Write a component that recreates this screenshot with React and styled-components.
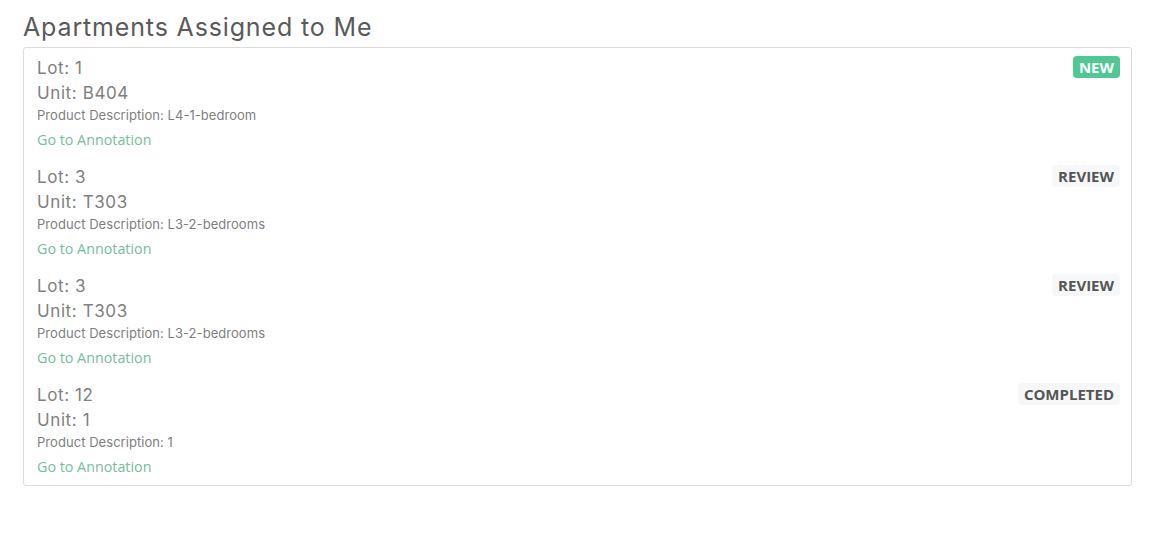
import React from "react";
import styled, { createGlobalStyle } from "styled-components";

const GlobalStyle = createGlobalStyle`
  body {
    margin: 0;
    background: #fff;
    font-family: "Inter", "Open Sans", sans-serif;
  }
`;

const Page = styled.div`
  padding: 12px 37px 12px 23px;
`;

const Title = styled.h2`
  margin: 0 0 4px;
  font-family: "Inter", sans-serif;
  font-weight: 400;
  font-size: 25px;
  line-height: 31px;
  color: #5a5a5a;
  letter-spacing: 0.85px;
`;

const Card = styled.div`
  border: 1px solid #dcdcdc;
  border-radius: 3px;
  padding: 8px 11px 6px 13px;
  display: flex;
  flex-direction: column;
  gap: 13px;
`;

const Item = styled.div`
  display: flex;
  justify-content: space-between;
  align-items: flex-start;
`;

const Info = styled.div`
  display: flex;
  flex-direction: column;
`;

const Line = styled.div`
  font-family: "Inter", sans-serif;
  font-size: 17px;
  line-height: ${(p) => p.$h}px;
  letter-spacing: 0.6px;
  color: #808080;
`;

const Desc = styled.div`
  font-family: "Inter", sans-serif;
  font-size: 13px;
  line-height: 18px;
  letter-spacing: 0.05px;
  color: #808080;
`;

const Link = styled.a`
  margin-top: 4px;
  font-family: "Open Sans", sans-serif;
  font-size: 14.3px;
  line-height: 24px;
  color: #74bd9f;
  text-decoration: none;
  cursor: pointer;
`;

const Badge = styled.span`
  font-family: "Open Sans", sans-serif;
  font-weight: 700;
  font-size: 15px;
  line-height: 22px;
  padding: 0 6px;
  border-radius: 4px;
  background: ${(p) => (p.$status === "NEW" ? "#4fc894" : "#f6f7f9")};
  color: ${(p) => (p.$status === "NEW" ? "#fff" : "#555")};
`;

const apartments = [
  { lot: "1", unit: "B404", desc: "L4-1-bedroom", status: "NEW" },
  { lot: "3", unit: "T303", desc: "L3-2-bedrooms", status: "REVIEW" },
  { lot: "3", unit: "T303", desc: "L3-2-bedrooms", status: "REVIEW" },
  { lot: "12", unit: "1", desc: "1", status: "COMPLETED" },
];

export default function App() {
  return (
    <Page>
      <GlobalStyle />
      <Title>Apartments Assigned to Me</Title>
      <Card>
        {apartments.map((a, i) => (
          <Item key={i}>
            <Info>
              <Line $h={24}>Lot: {a.lot}</Line>
              <Line $h={26}>Unit: {a.unit}</Line>
              <Desc>Product Description: {a.desc}</Desc>
              <Link>Go to Annotation</Link>
            </Info>
            <Badge $status={a.status}>{a.status}</Badge>
          </Item>
        ))}
      </Card>
    </Page>
  );
}
